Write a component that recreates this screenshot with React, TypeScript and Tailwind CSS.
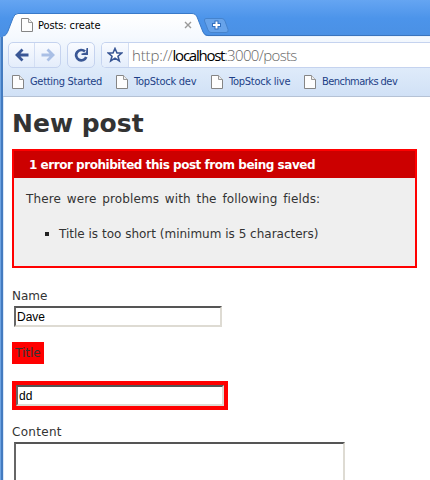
import React from "react";

function PageIcon() {
  return (
    <svg className="block shrink-0" width="12" height="14" viewBox="0 0 12 14">
      <path d="M.5.5h7l4 4v9H.5z" fill="#fdfdfd" stroke="#858585" />
      <path d="M7.5.5v4h4" fill="#eee" stroke="#999" />
    </svg>
  );
}

function Bookmark({ label, box, text }: { label: string; box: string; text: string }) {
  return (
    <div className={`flex shrink-0 items-center gap-[6px] ${box}`}>
      <PageIcon />
      <span className={`whitespace-nowrap text-[11px] leading-[14px] text-[#1d3f87] ${text}`}>{label}</span>
    </div>
  );
}

function TabStrip() {
  return (
    <div className="relative h-[37px] shrink-0 bg-gradient-to-b from-[#65a5f2] via-[#4c94ea] to-[#4a90e4]">
      <svg className="absolute left-0 top-0" width="430" height="37" viewBox="0 0 430 37">
        <defs>
          <linearGradient id="tab" x1="0" y1="0" x2="0" y2="1">
            <stop offset="0" stopColor="#fff" />
            <stop offset="1" stopColor="#f5f9fe" />
          </linearGradient>
        </defs>
        <path d="M205 35.5H430" stroke="#3a74bd" />
        <path d="M205 36.5H430" stroke="#e9f2fc" />
        <path d="M3 37V36C6 36 7 33 8 31L13 18Q14.500 13.500 18 13.500H192Q196 13.500 197.500 18L203 32Q204.500 36 208 36V37Z" fill="url(#tab)" />
        <path d="M3 36C6 36 7 33 8 31L13 18Q14.500 13.500 18 13.500H192Q196 13.500 197.500 18L203 32Q204.500 35.500 208 35.500" fill="none" stroke="#397ac9" />
        <path d="M206 18.500H222Q224 18.500 225 21L228 29.500Q229 32.500 226 32.500H211Q209 32.500 208 30L204.500 21Q204 18.500 206 18.500Z" fill="#67a3ea" stroke="#4583cd" />
        <path d="M216.500 20.500V29.500M212 25H221" stroke="#3270bf" strokeWidth="4" />
        <path d="M216.500 21.500V28.500M213 25H220" stroke="#fff" strokeWidth="2" />
      </svg>
      <div className="relative flex h-full w-[200px] items-start pl-[21px] pt-[18px]">
        <PageIcon />
        <span className="ml-[5px] mt-[1px] whitespace-nowrap text-[11px] leading-[14px] tracking-[-0.1px] text-black">Posts: create</span>
        <svg className="ml-auto mr-[8px] mt-[3px]" width="8" height="8" viewBox="0 0 8 8">
          <path d="M1 1l6 6M7 1L1 7" stroke="#9a9a9a" strokeWidth="1.400" />
        </svg>
      </div>
    </div>
  );
}

function Toolbar() {
  return (
    <div className="flex h-[31px] shrink-0 bg-gradient-to-b from-[#f5f9fe] to-[#dfebfa] pl-[5px] pt-[5px]">
      <div className="flex h-[26px] w-[53px] rounded-[5px] border border-[#c5d3ef] bg-gradient-to-b from-[#f9fbff] to-[#e4edfb]">
        <div className="flex w-[26px] items-center justify-center border-r border-[#d3def3]">
          <svg width="14" height="14" viewBox="0 0 14 14" fill="none" stroke="#3a5795" strokeWidth="2.800">
            <path d="M13.500 7H2M7.500 1.500L2 7l5.500 5.500" />
          </svg>
        </div>
        <div className="flex flex-1 items-center justify-center">
          <svg width="14" height="14" viewBox="0 0 14 14" fill="none" stroke="#a9bfe5" strokeWidth="2.800">
            <path d="M.5 7H12M6.500 1.500L12 7l-5.500 5.500" />
          </svg>
        </div>
      </div>
      <div className="ml-[6px] flex h-[26px] w-[28px] items-center justify-center rounded-[5px] border border-[#c5d3ef] bg-gradient-to-b from-[#f9fbff] to-[#e4edfb]">
        <svg width="15" height="14" viewBox="0 0 15 14" fill="none">
          <path d="M11 3.500A5.200 5.200 0 1 0 12.200 9" stroke="#3a5795" strokeWidth="2.700" />
          <path d="M14 0V7H7.500V5.500L12 4.500L12.500 0Z" fill="#3a5795" />
        </svg>
      </div>
      <div className="ml-[6px] flex h-[26px] flex-1 overflow-hidden rounded-l-[5px] border border-r-0 border-[#c5d3ef] bg-white">
        <div className="flex w-[27px] items-center justify-center border-r border-[#d3def3] bg-gradient-to-b from-[#f9fbff] to-[#e4edfb]">
          <svg width="16" height="16" viewBox="0 0 16 16">
            <path d="M8 1.500L10 6H14.700L11 9.200L12.300 14L8 11.200L3.700 14L5 9.200L1.300 6H6Z" fill="#fff" stroke="#3a5795" strokeWidth="1.600" />
          </svg>
        </div>
        <span className="whitespace-nowrap pl-[3px] font-['Open_Sans',sans-serif] text-[15px] font-light leading-[24px] text-[#666]">
          <span className="tracking-[-0.15px]">http://</span><span className="font-normal tracking-[-1.25px] text-black">localhost</span><span className="tracking-[-0.65px]">:3000/posts</span>
        </span>
      </div>
    </div>
  );
}

export default function App() {
  return (
    <div className="flex h-[480px] w-[430px] flex-col overflow-hidden bg-white font-['DejaVu_Sans_Condensed','DejaVu_Sans',sans-serif]">
      <TabStrip />
      <div className="flex min-h-0 flex-1">
        <div className="w-[3px] shrink-0 border-l border-[#6da3e2] bg-[#437bc0]" />
        <div className="flex min-w-0 flex-1 flex-col">
          <Toolbar />
          <div className="flex h-[29px] shrink-0 items-center border-b border-[#b5c2d5] bg-gradient-to-b from-[#dfebfa] to-[#d1e1f6] pl-[9px]">
            <Bookmark label="Getting Started" box="w-[104px]" text="tracking-[-0.3px]" />
            <Bookmark label="TopStock dev" box="w-[95px]" text="tracking-[-0.25px]" />
            <Bookmark label="TopStock live" box="w-[93px]" text="tracking-[-0.25px]" />
            <Bookmark label="Benchmarks dev" box="w-[110px]" text="tracking-[-0.55px]" />
          </div>
          <main className="flex min-h-0 flex-1 flex-col items-start overflow-hidden border-l border-[#d9e6f7] bg-white pl-[8px] font-['DejaVu_Sans',sans-serif] text-[#333]">
            <h1 className="mt-[11px] whitespace-nowrap text-[25px] font-bold leading-[32px]">New post</h1>
            <section className="mt-[9px] h-[119px] w-[405px] shrink-0 border-2 border-[#f00] bg-[#efefef]">
              <h2 className="h-[27px] whitespace-nowrap bg-[#c00] pl-[15px] text-[12px] font-bold leading-[29px] tracking-[-0.47px] text-white">
                1 error prohibited this post from being saved
              </h2>
              <p className="mt-[13px] whitespace-nowrap pl-[12px] text-[12px] leading-[16px] tracking-[0.11px] [word-spacing:1.9px]">There were problems with the following fields:</p>
              <ul className="mt-[19px] flex items-center pl-[31px] text-[12px] leading-[16px]">
                <li className="flex items-center whitespace-nowrap">
                  <span className="mr-[10px] h-[4px] w-[4px] bg-[#222]" />
                  Title is too short (minimum is 5 characters)
                </li>
              </ul>
            </section>
            <label className="mt-[20px] text-[12px] leading-[16px]">Name</label>
            <div className="ml-[2px] mt-[2px] h-[21px] w-[208px] shrink-0 border-2 border-b-[#dedbd3] border-l-[#666] border-r-[#dedbd3] border-t-[#555] bg-white pl-px font-['Liberation_Sans',sans-serif] text-[12px] leading-[19px] text-black">Dave</div>
            <label className="mt-[15px] h-[22px] w-[32px] shrink-0 bg-[#f00] pl-[3px] text-[12px] leading-[23px]">Title</label>
            <div className="mt-[17px] h-[29px] w-[216px] shrink-0 bg-[#f00] p-[4px]">
              <div className="h-[21px] w-[208px] border-2 border-b-[#dedbd3] border-l-[#666] border-r-[#dedbd3] border-t-[#555] bg-white pl-px font-['Liberation_Sans',sans-serif] text-[12px] leading-[19px] text-black">dd</div>
            </div>
            <label className="mt-[14px] text-[12px] leading-[16px] tracking-[0.3px]">Content</label>
            <div className="ml-[2px] mt-[2px] h-[60px] w-[331px] shrink-0 border-2 border-l-[#666] border-r-[#dedbd3] border-t-[#555] bg-white" />
          </main>
        </div>
      </div>
    </div>
  );
}
